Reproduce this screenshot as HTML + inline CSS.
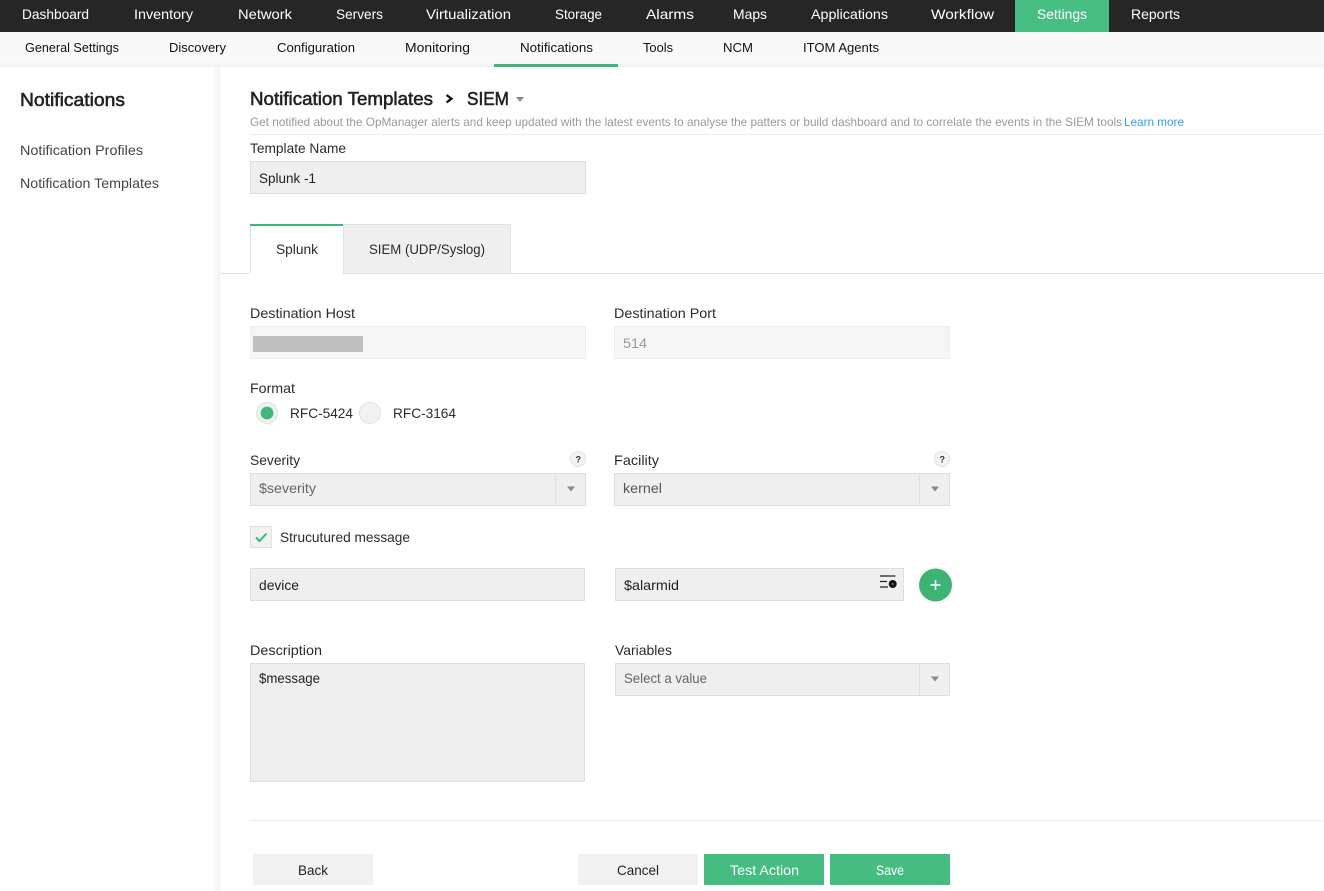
<!DOCTYPE html>
<html lang="en">
<head>
<meta charset="utf-8">
<title>Notification Templates - SIEM</title>
<style>
html,body{margin:0;padding:0;background:#fff;width:1324px;height:891px;overflow:hidden}
svg{display:block;position:absolute;left:0;top:0}
text{font-family:"Liberation Sans",sans-serif;font-size:14px;fill:#2b2b2b;white-space:pre}
.n text{fill:#fff}
.s text{fill:#111;font-size:13px}
.h{font-size:18px;fill:#222;stroke:#222;stroke-width:.55}
.box{fill:#efefef;stroke:#dedede;stroke-width:1}
.car{fill:#888}
</style>
</head>
<body>
<svg width="1324" height="891" viewBox="0 0 1324 891" xmlns="http://www.w3.org/2000/svg">
<defs>
<linearGradient id="sh" x1="0" y1="0" x2="0" y2="1"><stop offset="0" stop-color="#f9f9f9"/><stop offset="1" stop-color="#f1f1f1"/></linearGradient>
<linearGradient id="sv" x1="0" y1="0" x2="1" y2="0"><stop offset="0" stop-color="#fff"/><stop offset="1" stop-color="#f2f2f2"/></linearGradient>
</defs>
<rect width="1324" height="891" fill="#fff"/>

<!-- sidebar edge -->
<rect x="212" y="67" width="8" height="824" fill="url(#sv)"/>

<!-- top nav -->
<rect width="1324" height="32" fill="#262626"/>
<rect x="1015" width="94" height="32" fill="#48be82"/>
<g class="n">
<text x="22" y="19" textLength="67" lengthAdjust="spacingAndGlyphs">Dashboard</text>
<text x="134" y="19" textLength="59" lengthAdjust="spacingAndGlyphs">Inventory</text>
<text x="238" y="19" textLength="54" lengthAdjust="spacingAndGlyphs">Network</text>
<text x="336" y="19" textLength="47" lengthAdjust="spacingAndGlyphs">Servers</text>
<text x="426" y="19" textLength="85" lengthAdjust="spacingAndGlyphs">Virtualization</text>
<text x="555" y="19" textLength="47" lengthAdjust="spacingAndGlyphs">Storage</text>
<text x="646" y="19" textLength="48" lengthAdjust="spacingAndGlyphs">Alarms</text>
<text x="733" y="19" textLength="34" lengthAdjust="spacingAndGlyphs">Maps</text>
<text x="811" y="19" textLength="77" lengthAdjust="spacingAndGlyphs">Applications</text>
<text x="931" y="19" textLength="63" lengthAdjust="spacingAndGlyphs">Workflow</text>
<text x="1037" y="19" textLength="50" lengthAdjust="spacingAndGlyphs">Settings</text>
<text x="1131" y="19" textLength="49" lengthAdjust="spacingAndGlyphs">Reports</text>
</g>

<!-- sub nav -->
<rect y="32" width="1324" height="35" fill="#f9f9f9"/>
<rect y="61" width="1324" height="6" fill="url(#sh)"/>
<rect x="494" y="64" width="124" height="3" fill="#3fb77b"/>
<g class="s">
<text x="25" y="52" textLength="94" lengthAdjust="spacingAndGlyphs">General Settings</text>
<text x="169" y="52" textLength="57" lengthAdjust="spacingAndGlyphs">Discovery</text>
<text x="277" y="52" textLength="78" lengthAdjust="spacingAndGlyphs">Configuration</text>
<text x="405" y="52" textLength="65" lengthAdjust="spacingAndGlyphs">Monitoring</text>
<text x="520" y="52" textLength="73" lengthAdjust="spacingAndGlyphs">Notifications</text>
<text x="643" y="52" textLength="30" lengthAdjust="spacingAndGlyphs">Tools</text>
<text x="723" y="52" textLength="30" lengthAdjust="spacingAndGlyphs">NCM</text>
<text x="803" y="52" textLength="76" lengthAdjust="spacingAndGlyphs">ITOM Agents</text>
</g>

<!-- sidebar -->
<text x="20" y="106" class="h" textLength="105" lengthAdjust="spacingAndGlyphs">Notifications</text>
<text x="20" y="155" style="fill:#444" textLength="123" lengthAdjust="spacingAndGlyphs">Notification Profiles</text>
<text x="20" y="188" style="fill:#444" textLength="139" lengthAdjust="spacingAndGlyphs">Notification Templates</text>

<!-- heading -->
<text x="250" y="105" class="h" textLength="183" lengthAdjust="spacingAndGlyphs">Notification Templates</text>
<path d="M446.500 95l5 3.700-5 3.700" fill="none" stroke="#111" stroke-width="2.300"/>
<text x="467" y="105" class="h" textLength="42" lengthAdjust="spacingAndGlyphs">SIEM</text>
<path d="M516 97h8l-4 5z" class="car"/>
<text x="250" y="126" style="font-size:12px;fill:#999" textLength="872" lengthAdjust="spacingAndGlyphs">Get notified about the OpManager alerts and keep updated with the latest events to analyse the patters or build dashboard and to correlate the events in the SIEM tools</text>
<text x="1124" y="126" style="font-size:12px;fill:#2f9fe8" textLength="60" lengthAdjust="spacingAndGlyphs">Learn more</text>
<rect x="250" y="134" width="1074" height="1" fill="#eee"/>

<!-- template name -->
<text x="250" y="153" textLength="96" lengthAdjust="spacingAndGlyphs">Template Name</text>
<rect class="box" x="250.500" y="161.500" width="335" height="32"/>
<text x="259" y="183" style="fill:#222" textLength="57" lengthAdjust="spacingAndGlyphs">Splunk -1</text>

<!-- tabs -->
<rect x="220" y="273" width="1104" height="1" fill="#e2e2e2"/>
<rect x="343.500" y="224.500" width="167" height="49" fill="#efefef" stroke="#e2e2e2"/>
<rect x="250" y="224" width="93" height="50" fill="#fff"/>
<rect x="250" y="224" width="1" height="49" fill="#e2e2e2"/>
<rect x="343" y="224" width="1" height="50" fill="#e2e2e2"/>
<rect x="250" y="224" width="93" height="2" fill="#3fb77b"/>
<text x="276" y="254" textLength="42" lengthAdjust="spacingAndGlyphs">Splunk</text>
<text x="369" y="254" textLength="116" lengthAdjust="spacingAndGlyphs">SIEM (UDP/Syslog)</text>

<!-- destination -->
<text x="250" y="318" textLength="105" lengthAdjust="spacingAndGlyphs">Destination Host</text>
<rect x="250.500" y="326.500" width="335" height="32" fill="#f6f6f6" stroke="#eee"/>
<rect x="253" y="336" width="110" height="16" fill="#c0c0c0"/>
<text x="614" y="318" textLength="102" lengthAdjust="spacingAndGlyphs">Destination Port</text>
<rect x="614.500" y="326.500" width="335" height="32" fill="#f6f6f6" stroke="#eee"/>
<text x="623" y="348" style="fill:#999" textLength="24" lengthAdjust="spacingAndGlyphs">514</text>

<!-- format -->
<text x="250" y="393" textLength="45" lengthAdjust="spacingAndGlyphs">Format</text>
<circle cx="267" cy="413" r="10.500" fill="#f1f1f1" stroke="#e0e0e0"/>
<circle cx="267" cy="413" r="6.400" fill="#3fb97b"/>
<text x="290" y="418" textLength="63" lengthAdjust="spacingAndGlyphs">RFC-5424</text>
<circle cx="370" cy="413" r="10.500" fill="#f1f1f1" stroke="#e0e0e0"/>
<text x="393" y="418" textLength="63" lengthAdjust="spacingAndGlyphs">RFC-3164</text>

<!-- severity / facility -->
<text x="250" y="465" textLength="50" lengthAdjust="spacingAndGlyphs">Severity</text>
<circle cx="578" cy="459" r="7.500" fill="#f3f3f3" stroke="#e0e0e0"/>
<text x="575.500" y="462.500" style="font-size:9px;font-weight:bold;fill:#333">?</text>
<rect class="box" x="250.500" y="473.500" width="335" height="32"/>
<rect x="555" y="474" width="1" height="31" fill="#e2e2e2"/>
<path d="M567 486.500h8l-4 5z" class="car"/>
<text x="259" y="493" style="fill:#666" textLength="57" lengthAdjust="spacingAndGlyphs">$severity</text>

<text x="614" y="465" textLength="45" lengthAdjust="spacingAndGlyphs">Facility</text>
<circle cx="942" cy="459" r="7.500" fill="#f3f3f3" stroke="#e0e0e0"/>
<text x="939.500" y="462.500" style="font-size:9px;font-weight:bold;fill:#333">?</text>
<rect class="box" x="614.500" y="473.500" width="335" height="32"/>
<rect x="919" y="474" width="1" height="31" fill="#e2e2e2"/>
<path d="M931 486.500h8l-4 5z" class="car"/>
<text x="623" y="493" style="fill:#555" textLength="39" lengthAdjust="spacingAndGlyphs">kernel</text>

<!-- checkbox -->
<rect x="250.500" y="526.500" width="21" height="21" fill="#f1f1f1" stroke="#e0e0e0"/>
<path d="M256 537.500l3.500 3.500 7-7.500" fill="none" stroke="#3fb97b" stroke-width="2"/>
<text x="280" y="542" textLength="130" lengthAdjust="spacingAndGlyphs">Strucutured message</text>

<!-- message row -->
<rect class="box" x="250.500" y="568.500" width="334" height="32"/>
<text x="259" y="590" style="fill:#222" textLength="40" lengthAdjust="spacingAndGlyphs">device</text>
<rect class="box" x="615.500" y="568.500" width="288" height="32"/>
<text x="624" y="590" style="fill:#222" textLength="55" lengthAdjust="spacingAndGlyphs">$alarmid</text>
<path d="M880 576h15.500M880 581.500h7M880 587h8" fill="none" stroke="#222" stroke-width="1.200"/>
<circle cx="892.700" cy="584" r="4" fill="#151515"/>
<circle cx="892.700" cy="584" r="1" fill="#777"/>
<circle cx="935.500" cy="585" r="16.500" fill="#3cb474"/>
<path d="M935.500 580v10M930.500 585h10" stroke="#fff" stroke-width="1.600" fill="none"/>

<!-- description -->
<text x="250" y="655" textLength="72" lengthAdjust="spacingAndGlyphs">Description</text>
<rect class="box" x="250.500" y="663.500" width="334" height="118"/>
<text x="259" y="683" style="fill:#222" textLength="61" lengthAdjust="spacingAndGlyphs">$message</text>
<text x="615" y="655" textLength="57" lengthAdjust="spacingAndGlyphs">Variables</text>
<rect class="box" x="615.500" y="663.500" width="334" height="32"/>
<rect x="919" y="664" width="1" height="31" fill="#e2e2e2"/>
<path d="M931 676.500h8l-4 5z" class="car"/>
<text x="624" y="683" style="fill:#666" textLength="83" lengthAdjust="spacingAndGlyphs">Select a value</text>

<!-- footer -->
<rect x="250" y="820" width="1074" height="1" fill="#eee"/>
<rect x="253" y="854" width="120" height="31" fill="#f1f1f1"/>
<text x="298" y="875" style="fill:#222" textLength="30" lengthAdjust="spacingAndGlyphs">Back</text>
<rect x="578" y="854" width="120" height="31" fill="#f1f1f1"/>
<text x="617" y="875" style="fill:#222" textLength="42" lengthAdjust="spacingAndGlyphs">Cancel</text>
<rect x="704" y="854" width="120" height="31" fill="#45bd80"/>
<text x="730" y="875" style="fill:#fff" textLength="69" lengthAdjust="spacingAndGlyphs">Test Action</text>
<rect x="830" y="854" width="120" height="31" fill="#45bd80"/>
<text x="876" y="875" style="fill:#fff" textLength="28" lengthAdjust="spacingAndGlyphs">Save</text>
</svg>
</body>
</html>
